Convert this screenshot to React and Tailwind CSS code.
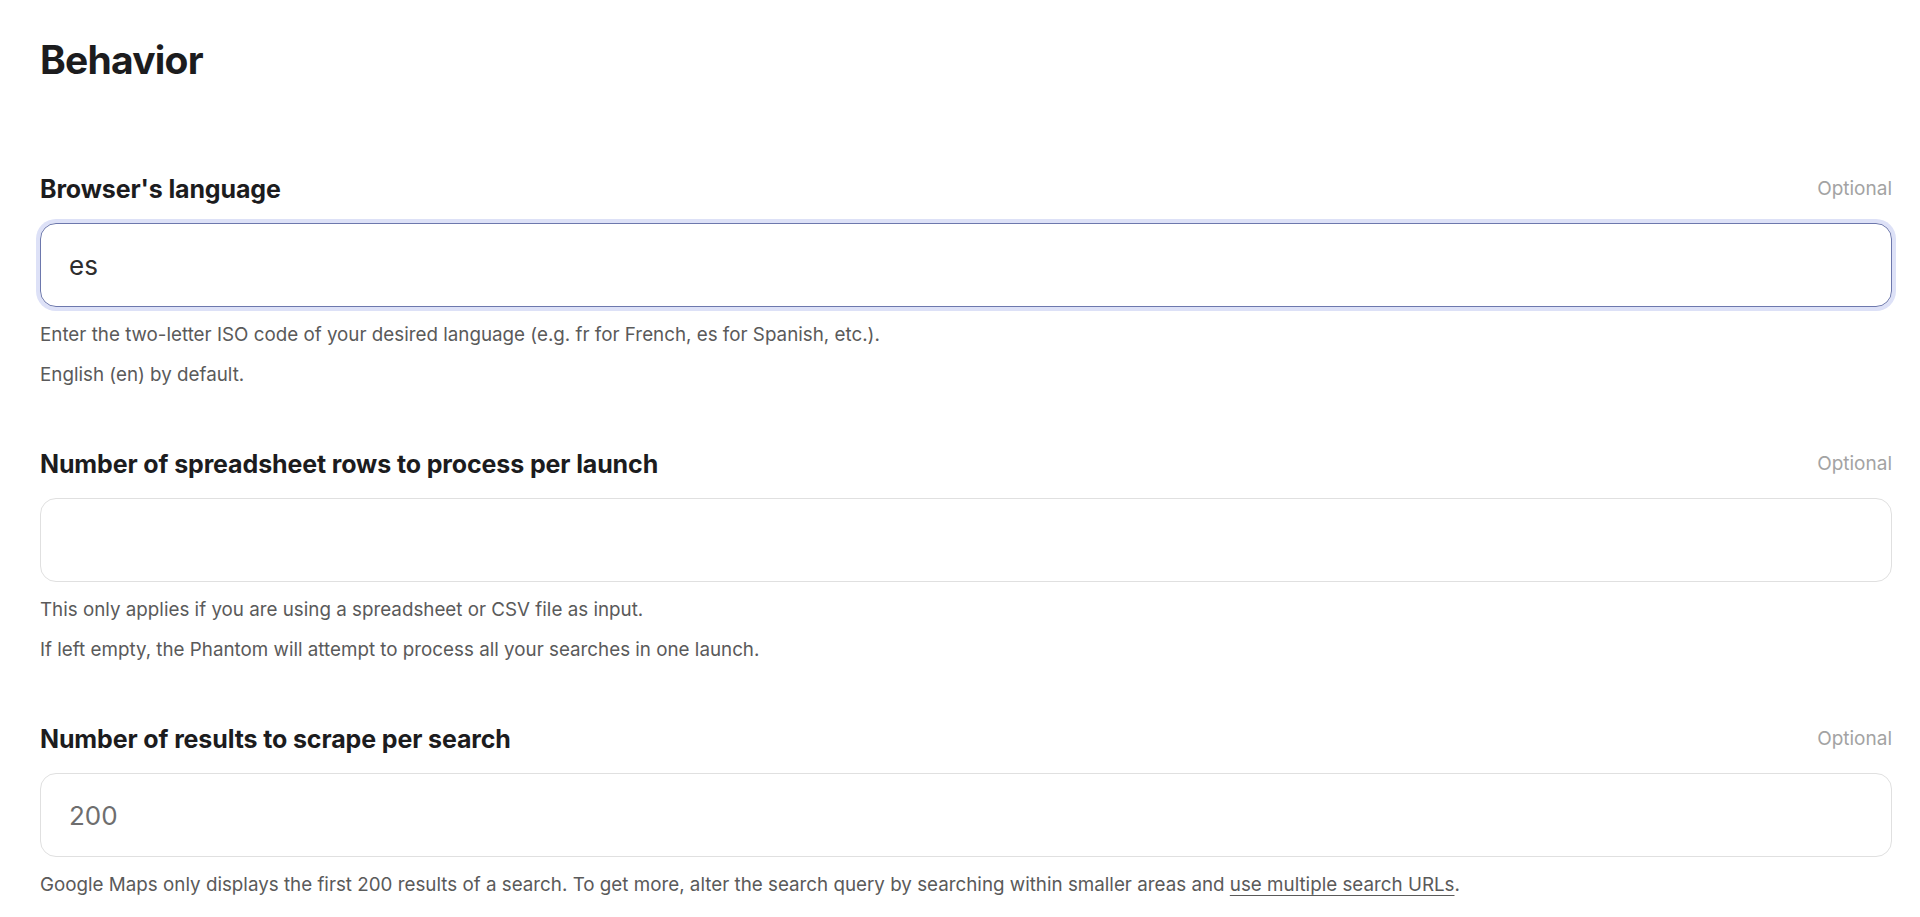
import React from 'react';

const font = { fontFamily: 'Inter, "Noto Sans", sans-serif' };

function Field({ label, value, placeholder, focused, children }) {
  return (
    <div className="mb-[59px]">
      <div className="flex items-center justify-between mb-[18px]">
        <label className="text-[25px] leading-[32px] font-bold text-[#1c1c1e] tracking-[-0.005em]">{label}</label>
        <span className="text-[19px] leading-[28px] text-[#a3a3a3]">Optional</span>
      </div>
      <input
        type="text"
        defaultValue={value}
        placeholder={placeholder}
        className={
          focused
            ? 'w-full h-[84px] rounded-2xl border border-[#6d78ad] ring-4 ring-[#dde1f7] px-7 text-[26px] text-[#2e2e2e] outline-none placeholder:text-[#6e6e6e]'
            : 'w-full h-[84px] rounded-2xl border border-[#e0e0e0] px-7 text-[26px] text-[#2e2e2e] outline-none placeholder:text-[#6e6e6e]'
        }
        style={font}
      />
      <div className="mt-[14px] flex flex-col gap-3 text-[18.8px] leading-[28px] text-[#5a5a5a]">
        {children}
      </div>
    </div>
  );
}

export default function App() {
  return (
    <div className="min-h-screen bg-white pl-10 pr-7 pt-9" style={font}>
      <h1 className="text-[39px] leading-[48px] font-bold text-[#1c1c1e] tracking-[-0.02em] mb-[89px]">Behavior</h1>

      <Field label="Browser's language" value="es" focused>
        <p>Enter the two-letter ISO code of your desired language (e.g. fr for French, es for Spanish, etc.).</p>
        <p>English (en) by default.</p>
      </Field>

      <Field label="Number of spreadsheet rows to process per launch">
        <p>This only applies if you are using a spreadsheet or CSV file as input.</p>
        <p>If left empty, the Phantom will attempt to process all your searches in one launch.</p>
      </Field>

      <Field label="Number of results to scrape per search" placeholder="200">
        <p>
          Google Maps only displays the first 200 results of a search. To get more, alter the search query by searching within smaller areas and{' '}
          <a href="#" className="underline underline-offset-4">use multiple search URLs</a>.
        </p>
      </Field>
    </div>
  );
}
